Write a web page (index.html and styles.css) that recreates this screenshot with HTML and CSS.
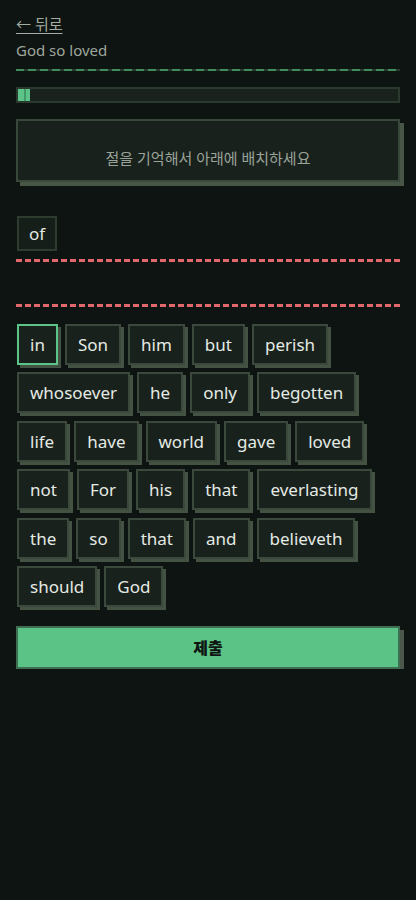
FILE: index.html
```html
<!DOCTYPE html>
<html lang="ko">
<head>
<meta charset="utf-8">
<link rel="stylesheet" href="styles.css">
</head>
<body>
<div class="page">
  <a class="back" href="#">← 뒤로</a>
  <div class="title">God so loved</div>
  <div class="rule-green"></div>
  <div class="progress"><div class="progress-fill" style="width:12px"></div></div>
  <div class="card">절을 기억해서 아래에 배치하세요</div>
  <div class="placed">
    <span class="placed-chip">of</span>
  </div>
  <div class="drop">
    <div class="rule-red"></div>
    <div class="drop-area"></div>
    <div class="rule-red"></div>
  </div>
  <div class="bank">
    <span class="chip chip-active">in</span>
    <span class="chip">Son</span>
    <span class="chip">him</span>
    <span class="chip">but</span>
    <span class="chip">perish</span>
    <span class="chip">whosoever</span>
    <span class="chip">he</span>
    <span class="chip">only</span>
    <span class="chip">begotten</span>
    <span class="chip">life</span>
    <span class="chip">have</span>
    <span class="chip">world</span>
    <span class="chip">gave</span>
    <span class="chip">loved</span>
    <span class="chip">not</span>
    <span class="chip">For</span>
    <span class="chip">his</span>
    <span class="chip">that</span>
    <span class="chip">everlasting</span>
    <span class="chip">the</span>
    <span class="chip">so</span>
    <span class="chip">that</span>
    <span class="chip">and</span>
    <span class="chip">believeth</span>
    <span class="chip">should</span>
    <span class="chip">God</span>
  </div>
  <button class="submit">제출</button>
</div>
</body>
</html>
```
FILE: styles.css
```css
html, body {
  margin: 0;
  padding: 0;
  background: #0e1411;
}
body {
  font-family: "Noto Sans", "Noto Sans CJK KR", sans-serif;
  color: #e2e8e2;
}
.page {
  padding: 14px 16px 0 16px;
  display: flex;
  flex-direction: column;
  width: 384px;
}
.back {
  align-self: flex-start;
  color: #a3aca3;
  font-size: 15px;
  line-height: 20px;
  text-decoration: underline;
  text-underline-offset: 3px;
}
.title {
  margin-top: 6px;
  color: #9ea79e;
  font-size: 15px;
  line-height: 20px;
}
.rule-green {
  margin-top: 9px;
  height: 2px;
  background: repeating-linear-gradient(90deg, #3f8c5c 0 8px, #2a3a30 8px 12px);
}
.progress {
  margin-top: 16px;
  height: 12px;
  border: 2px solid #2b3a2e;
  background: #1a221d;
}
.progress-fill {
  height: 100%;
  background: linear-gradient(90deg, #5cc488 0 6px, #3f9a66 6px 8px, #5cc488 8px);
}
.card {
  margin-top: 16px;
  height: 46px;
  padding-top: 13px;
  border: 2px solid #38483a;
  background: #19211c;
  box-shadow: 4px 4px 0 #485648;
  display: flex;
  align-items: center;
  justify-content: center;
  color: #9aa39a;
  font-size: 15px;
}
.placed {
  margin-top: 34px;
  display: flex;
  gap: 6px;
}
.placed-chip {
  height: 31px;
  padding: 0 10px;
  border: 2px solid #2e3c30;
  background: #161e19;
  display: flex;
  align-items: center;
  font-size: 17px;
  color: #e2e8e2;
  margin-left: 1px;
}
.drop {
  margin-top: 8px;
  display: flex;
  flex-direction: column;
}
.rule-red {
  height: 3px;
  background: repeating-linear-gradient(90deg, #e0676a 0 6px, transparent 6px 9px);
}
.drop-area {
  height: 42px;
}
.bank {
  margin-top: 17px;
  display: flex;
  flex-wrap: wrap;
  gap: 7.4px 7px;
  padding-left: 1px;
}
.chip {
  height: 37px;
  padding: 0 11px;
  border: 2px solid #3a493c;
  background: #19211c;
  box-shadow: 3px 3px 0 #445244;
  display: flex;
  align-items: center;
  font-size: 17px;
  color: #e4eae4;
}
.chip-active {
  border-color: #5cc488;
}
.submit {
  margin-top: 19px;
  height: 43px;
  border: 2px solid #3f6e52;
  background: #5cc386;
  box-shadow: 4px 4px 0 #4a574a;
  font-family: "Noto Sans CJK KR", sans-serif;
  font-weight: 900;
  font-size: 16px;
  color: #0e1411;
  width: 384px;
  margin-left: 0;
}
```
